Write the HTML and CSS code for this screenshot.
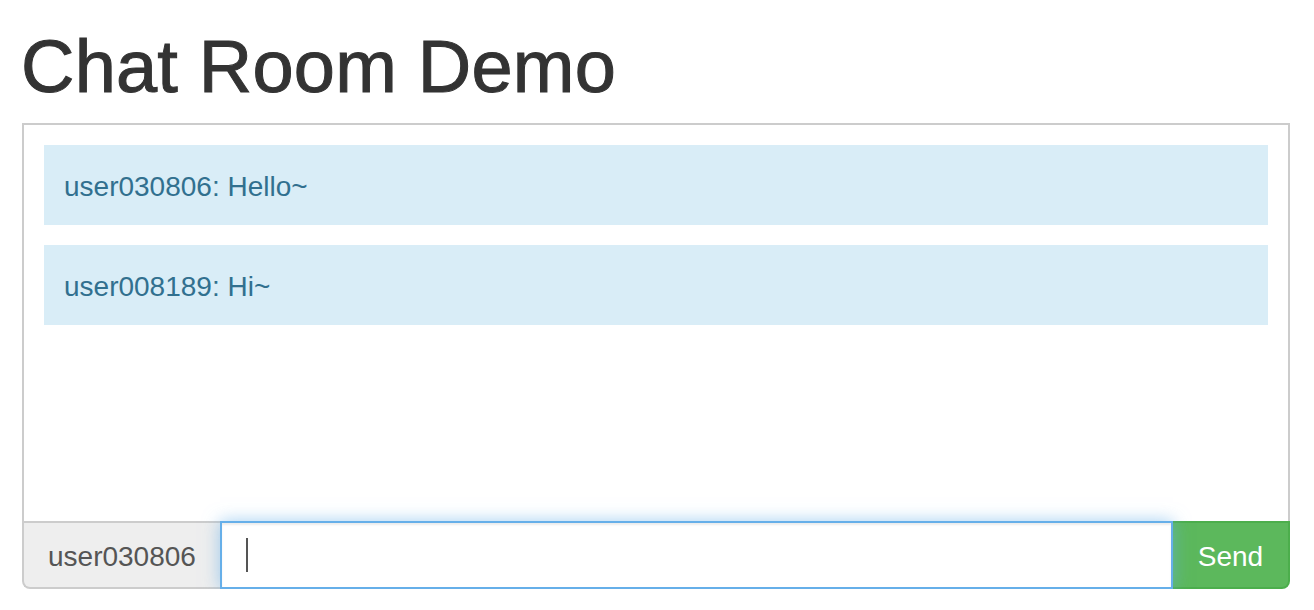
FILE: index.html
```html
<!DOCTYPE html>
<html>
<head>
<meta charset="utf-8">
<title>Chat Room Demo</title>
<link rel="stylesheet" href="styles.css">
</head>
<body>
<div class="page">
  <h1 class="title">Chat Room Demo</h1>
  <div class="chat">
    <div class="messages">
      <div class="msg">user030806: Hello~</div>
      <div class="msg">user008189: Hi~</div>
    </div>
    <div class="input-group">
      <span class="addon">user030806</span>
      <div class="field"><span class="caret"></span></div>
      <button class="send" type="button">Send</button>
    </div>
  </div>
</div>
</body>
</html>
```
FILE: styles.css
```css
html, body {
  margin: 0;
  padding: 0;
  background: #fff;
}
body {
  font-family: "Liberation Sans", Arial, Helvetica, sans-serif;
  color: #333;
}
.page {
  padding: 27px 24px 0 22px;
}
.title {
  margin: 0 0 17px -1px;
  font-size: 74px;
  line-height: 79px;
  font-weight: 500;
  color: #333;
  -webkit-text-stroke: 1px #333;
  letter-spacing: 0.2px;
}
.chat {
  display: flex;
  flex-direction: column;
}
.messages {
  height: 398px;
  box-sizing: border-box;
  border: 2px solid #ccc;
  border-bottom: 0;
  padding: 20px 20px;
  display: flex;
  flex-direction: column;
  gap: 20px;
}
.msg {
  background: #d9edf7;
  color: #31708f;
  font-size: 28px;
  line-height: 40px;
  padding: 22px 20px 18px;
}
.input-group {
  display: flex;
  height: 68px;
}
.addon {
  box-sizing: border-box;
  display: flex;
  align-items: center;
  padding: 3px 24px 0;
  background: #eee;
  color: #555;
  font-size: 28px;
  border: 2px solid #ccc;
  border-right: 0;
  border-radius: 0 0 0 8px;
}
.field {
  flex: 1;
  box-sizing: border-box;
  border: 2px solid #66afe9;
  background: #fff;
  box-shadow: inset 0 2px 2px rgba(0,0,0,.075), 0 0 16px rgba(102,175,233,.6);
  padding: 0 24px;
  display: flex;
  align-items: center;
  position: relative;
  z-index: 1;
}
.caret {
  display: block;
  width: 2px;
  height: 34px;
  background: #555;
}
.send {
  box-sizing: border-box;
  font-family: inherit;
  font-size: 28px;
  color: #fff;
  background: #5cb85c;
  border: 2px solid #4cae4c;
  border-left-width: 0;
  border-radius: 0 0 8px 0;
  padding: 4px 24px 0 24px;
  margin: 0;
  width: 117px;
}
```
